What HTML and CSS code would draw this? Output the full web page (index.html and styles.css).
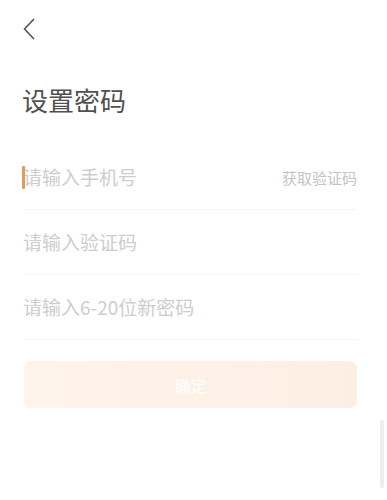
FILE: index.html
```html
<!DOCTYPE html>
<html lang="zh-CN">
<head>
<meta charset="utf-8">
<title>设置密码</title>
<link rel="stylesheet" href="styles.css">
</head>
<body>
<div class="page">
  <header class="nav">
    <svg class="back" width="14" height="22" viewBox="0 0 14 22" aria-label="返回">
      <path d="M11.5 1.5 L2.5 11 L11.5 20.5" fill="none" stroke="#5a5a5a" stroke-width="1.8" stroke-linecap="round" stroke-linejoin="round"/>
    </svg>
  </header>
  <h1 class="title">设置密码</h1>
  <form class="form">
    <div class="row">
      <span class="caret"></span>
      <input class="field" type="tel" placeholder="请输入手机号">
      <span class="code">获取验证码</span>
    </div>
    <div class="row">
      <input class="field" type="text" placeholder="请输入验证码">
    </div>
    <div class="row">
      <input class="field" type="password" placeholder="请输入6-20位新密码">
    </div>
    <button class="submit" type="button">确定</button>
  </form>
</div>
<div class="scroll-hint"></div>
</body>
</html>
```
FILE: styles.css
```css
html, body {
  margin: 0;
  padding: 0;
  background: #ffffff;
}
body {
  font-family: "Noto Sans CJK SC", "Noto Sans", sans-serif;
  width: 387px;
  height: 500px;
  overflow: hidden;
  position: relative;
}
.page {
  padding: 0 30px 0 23px;
}
.nav {
  height: 58px;
  display: flex;
  align-items: flex-start;
  padding-top: 18px;
  box-sizing: border-box;
}
.back {
  display: block;
  margin-left: -1px;
}
.title {
  margin: 24px 0 0 -1px;
  font-size: 26px;
  line-height: 36px;
  font-weight: 400;
  color: #505050;
  letter-spacing: 0;
}
.form {
  margin-top: 27px;
  padding-left: 1px;
}
.row {
  position: relative;
  height: 64px;
  display: flex;
  align-items: center;
  border-bottom: 1px solid #f3f3f3;
}
.caret {
  position: absolute;
  left: -2px;
  top: 21px;
  width: 2.5px;
  height: 23px;
  background: #e89a55;
  border-radius: 1px;
}
.field {
  flex: 1;
  min-width: 0;
  border: 0;
  outline: none;
  padding: 0;
  margin: 0 0 0 -1px;
  font-family: inherit;
  font-size: 19px;
  line-height: 28px;
  height: 28px;
  color: #333;
  background: transparent;
}
.field::placeholder {
  color: #cdcdcd;
}
.code {
  font-size: 15px;
  color: #c4c4c4;
  white-space: nowrap;
}
.submit {
  display: block;
  width: 100%;
  height: 47px;
  margin-top: 21px;
  border: 0;
  border-radius: 7px;
  background: linear-gradient(90deg, #fef4ea 0%, #fdeee3 100%);
  color: #ffffff;
  font-family: inherit;
  font-size: 16px;
  padding: 0;
}
.scroll-hint {
  position: absolute;
  left: 380px;
  top: 420px;
  width: 4px;
  height: 68px;
  border-radius: 3px;
  background: #ededed;
}
```
